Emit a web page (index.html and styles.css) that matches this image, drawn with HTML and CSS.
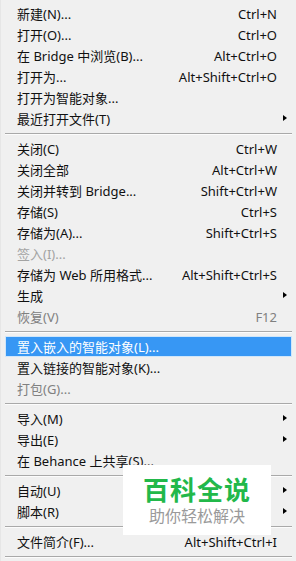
FILE: index.html
```html
<!DOCTYPE html>
<html lang="zh-CN">
<head>
	<meta charset="UTF-8">
	<title>文件</title>
	<link rel="stylesheet" href="styles.css">
</head>
<body>
    <div class="menu">
        <div class="item"><span class="label">新建(N)...</span><span class="key">Ctrl+N</span><span class="sub"></span></div>
        <div class="item"><span class="label">打开(O)...</span><span class="key">Ctrl+O</span><span class="sub"></span></div>
        <div class="item"><span class="label">在 Bridge 中浏览(B)...</span><span class="key">Alt+Ctrl+O</span><span class="sub"></span></div>
        <div class="item"><span class="label">打开为...</span><span class="key">Alt+Shift+Ctrl+O</span><span class="sub"></span></div>
        <div class="item"><span class="label">打开为智能对象...</span><span class="key"></span><span class="sub"></span></div>
        <div class="item"><span class="label">最近打开文件(T)</span><span class="key"></span><span class="sub arrow"></span></div>
        <div class="sep"></div>

        <div class="item"><span class="label">关闭(C)</span><span class="key">Ctrl+W</span><span class="sub"></span></div>
        <div class="item"><span class="label">关闭全部</span><span class="key">Alt+Ctrl+W</span><span class="sub"></span></div>
        <div class="item"><span class="label">关闭并转到 Bridge...</span><span class="key">Shift+Ctrl+W</span><span class="sub"></span></div>
        <div class="item"><span class="label">存储(S)</span><span class="key">Ctrl+S</span><span class="sub"></span></div>
        <div class="item"><span class="label">存储为(A)...</span><span class="key">Shift+Ctrl+S</span><span class="sub"></span></div>
        <div class="item disabled light"><span class="label">签入(I)...</span><span class="key"></span><span class="sub"></span></div>
        <div class="item"><span class="label">存储为 Web 所用格式...</span><span class="key">Alt+Shift+Ctrl+S</span><span class="sub"></span></div>
        <div class="item"><span class="label">生成</span><span class="key"></span><span class="sub arrow"></span></div>
        <div class="item disabled"><span class="label">恢复(V)</span><span class="key">F12</span><span class="sub"></span></div>
        <div class="sep"></div>

        <div class="item active"><span class="label">置入嵌入的智能对象(L)...</span><span class="key"></span><span class="sub"></span></div>
        <div class="item"><span class="label">置入链接的智能对象(K)...</span><span class="key"></span><span class="sub"></span></div>
        <div class="item disabled"><span class="label">打包(G)...</span><span class="key"></span><span class="sub"></span></div>
        <div class="sep"></div>

        <div class="item"><span class="label">导入(M)</span><span class="key"></span><span class="sub arrow"></span></div>
        <div class="item"><span class="label">导出(E)</span><span class="key"></span><span class="sub arrow"></span></div>
        <div class="item"><span class="label">在 Behance 上共享(S)...</span><span class="key"></span><span class="sub"></span></div>
        <div class="sep"></div>

        <div class="item"><span class="label">自动(U)</span><span class="key"></span><span class="sub arrow"></span></div>
        <div class="item"><span class="label">脚本(R)</span><span class="key"></span><span class="sub arrow"></span></div>
        <div class="sep"></div>

        <div class="item"><span class="label">文件简介(F)...</span><span class="key">Alt+Shift+Ctrl+I</span><span class="sub"></span></div>
        <div class="sep"></div>
    </div>

    <div class="watermark">
        <div class="wm_title">百科全说</div>
        <div class="wm_sub">助你轻松解决</div>
    </div>
</body>
</html>
```

FILE: styles.css
```css
body{
    margin: 0;
    background: #f0f0f0;
    font-family: "Noto Sans", "Noto Sans CJK SC", sans-serif;
    font-size: 13px;
    color: #111;
}
.menu{
    width: 296px;
    height: 561px;
    box-sizing: border-box;
    padding: 3px 4px 0 4px;
    border-left: 1px solid #e6e6e6;
    overflow: hidden;
}
.item{
    height: 21px;
    display: flex;
    align-items: center;
    box-sizing: border-box;
    padding-left: 12px;
    white-space: nowrap;
}
.label{
    flex: 1;
}
.key{
    text-align: right;
}
.sub{
    width: 15px;
    height: 21px;
    position: relative;
}
.arrow::after{
    content: "";
    position: absolute;
    left: 6px;
    top: 7px;
    border-left: 4px solid #000;
    border-top: 3.5px solid transparent;
    border-bottom: 3.5px solid transparent;
}
.disabled{
    color: #808080;
}
.light{
    color: #a3a3a3;
}
.active{
    background: #3797f4;
    border: 1px solid #cfe6fa;
    padding-left: 11px;
    color: #fff;
}
.sep{
    height: 9px;
    display: flex;
    flex-direction: column;
    justify-content: center;
}
.sep::before{
    content: "";
    height: 1px;
    background: #a9a9a9;
    border-bottom: 1px solid #fcfcfc;
}
.watermark{
    position: absolute;
    left: 123px;
    top: 465px;
    width: 148px;
    height: 70px;
    background: #fff;
    display: flex;
    flex-direction: column;
    align-items: center;
}
.wm_title{
    margin-top: 11px;
    font-size: 26px;
    line-height: 28px;
    font-weight: bold;
    color: #22b84a;
    letter-spacing: 1px;
}
.wm_sub{
    margin-top: 3px;
    font-size: 16px;
    line-height: 19px;
    color: #9a9a9a;
}
```
